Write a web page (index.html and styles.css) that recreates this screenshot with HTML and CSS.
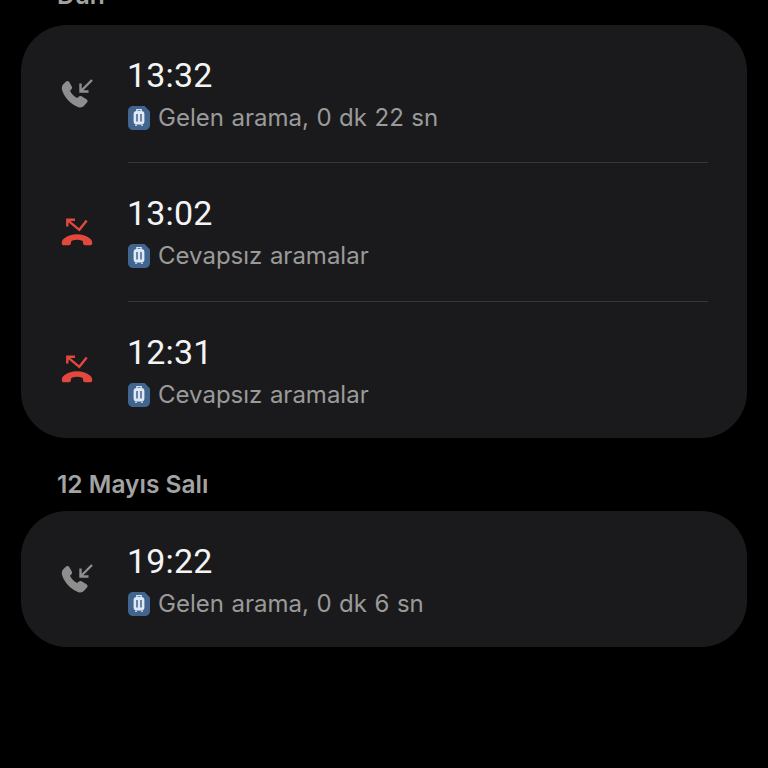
FILE: index.html
```html
<!DOCTYPE html>
<html lang="tr">
<head>
  <meta charset="UTF-8" />
  <meta name="viewport" content="width=device-width, initial-scale=1" />
  <title>Arama geçmişi</title>
  <link rel="stylesheet" href="styles.css">
</head>
<body>
  <svg class="defs" width="0" height="0" aria-hidden="true">
    <symbol id="incoming" viewBox="0 0 32 30">
      <path d="M2 5.500 5 2.500C6 1.600 7.500 1.800 8.200 3L10.800 7.500C11.300 8.500 11.100 9.600 10.300 10.400L9 11.700C10.500 15 13 17.500 16.300 19L17.600 17.700C18.400 16.900 19.600 16.700 20.500 17.300L25.500 20.200C26.700 21 27 22.500 26 23.500L23 26.800C21.600 28.400 19.400 28.900 17.500 28.200 10 25.500 4 19.500 1.200 11.500 .5 9.500 .8 7 2 5.500z" fill="#8e8e8e"/>
      <path d="M31 1 20 12M19.500 4.500V12.500H27.500" fill="none" stroke="#8e8e8e" stroke-width="2.400"/>
    </symbol>
    <symbol id="missed" viewBox="0 0 32 30">
      <path d="M14 1.800H6.300V8.500M6.300 1.800 18.300 11.800 25.700 2.500" fill="none" stroke="#e2483d" stroke-width="2.400"/>
      <path d="M.8 25.500c-.2-2.200.6-4 2.200-5.100C10.700 15 21.300 15 29 20.400c1.600 1.100 2.400 2.900 2.200 5.100-.1 1-.9 1.800-1.900 1.800h-5.300c-1 0-1.800-.7-1.900-1.700l-.2-1.800c-.1-.7-.5-1.200-1.200-1.400-2.900-.8-5.900-.8-9.400 0-.7.200-1.100.7-1.200 1.400l-.2 1.800c-.1 1-.9 1.700-1.900 1.700H2.700c-1 0-1.800-.8-1.900-1.800z" fill="#e2483d"/>
    </symbol>
    <symbol id="sim" viewBox="0 0 22 24">
      <path d="M5 0h11.500L22 5.500V19c0 2.800-2.200 5-5 5H5c-2.800 0-5-2.200-5-5V5c0-2.800 2.200-5 5-5z" fill="#41658f"/>
      <path d="M8.800 5V3.600h4.400V5" fill="none" stroke="#dfe8f4" stroke-width="1.300"/>
      <rect x="5.600" y="5" width="10.800" height="13.500" rx="3" fill="#dfe8f4"/>
      <path d="M9 8v7.500M13 8v7.500" stroke="#41658f" stroke-width="1.500"/>
      <path d="M8 18.500v1.500M14 18.500v1.500" stroke="#dfe8f4" stroke-width="1.500"/>
    </symbol>
  </svg>

  <h2 class="day-label day-label-first">Dün</h2>
  <section class="card">
    <div class="row row-top">
      <svg class="call-icon"><use href="#incoming"/></svg>
      <div class="row-body">
        <div class="time">13:32</div>
        <div class="detail"><svg class="sim"><use href="#sim"/></svg>Gelen arama, 0 dk 22 sn</div>
      </div>
    </div>
    <div class="row row-mid">
      <svg class="call-icon"><use href="#missed"/></svg>
      <div class="row-body">
        <div class="time">13:02</div>
        <div class="detail"><svg class="sim"><use href="#sim"/></svg>Cevapsız aramalar</div>
      </div>
    </div>
    <div class="row">
      <svg class="call-icon"><use href="#missed"/></svg>
      <div class="row-body">
        <div class="time">12:31</div>
        <div class="detail"><svg class="sim"><use href="#sim"/></svg>Cevapsız aramalar</div>
      </div>
    </div>
  </section>

  <h2 class="day-label">12 Mayıs Salı</h2>
  <section class="card">
    <div class="row">
      <svg class="call-icon"><use href="#incoming"/></svg>
      <div class="row-body">
        <div class="time">19:22</div>
        <div class="detail"><svg class="sim"><use href="#sim"/></svg>Gelen arama, 0 dk 6 sn</div>
      </div>
    </div>
  </section>
</body>
</html>
```

FILE: styles.css
```css
html, body {
  height: 100%;
}

body {
  margin: 0;
  padding: 0 21px;
  background-color: #000;
  font-family: Inter, Roboto, sans-serif;
  overflow: hidden;
}

.defs {
  position: absolute;
}

.day-label {
  margin: 0;
  padding: 33px 0 0 36px;
  height: 40px;
  line-height: 26px;
  font-size: 24.5px;
  font-weight: 600;
  color: #a3a3a3;
}

.day-label-first {
  padding-top: 0;
  height: 25px;
  margin-top: -18px;
  margin-bottom: 18px;
}

.card {
  background-color: #1a1a1c;
  border-radius: 46px;
  padding: 0 39px 0 40px;
}

.row {
  display: flex;
  align-items: center;
  height: 136px;
}

.row-top {
  height: 138px;
}

.row-mid {
  height: 139px;
}

.call-icon {
  width: 32px;
  height: 30px;
  flex: none;
  margin-right: 35px;
}

.row-body {
  flex: 1;
  align-self: stretch;
  padding-top: 29px;
  box-sizing: border-box;
  border-bottom: 1px solid #363638;
}

.row:last-child .row-body {
  border-bottom: none;
}

.time {
  margin-left: -1px;
  font-family: Roboto, sans-serif;
  font-size: 34px;
  line-height: 42px;
  letter-spacing: 0.2px;
  color: #f4f4f4;
}

.detail {
  display: flex;
  align-items: center;
  margin-top: 7px;
  font-size: 24px;
  line-height: 30px;
  word-spacing: 0.8px;
  color: #9a9a9a;
}

.sim {
  width: 22px;
  height: 24px;
  flex: none;
  margin-right: 8px;
}
```
